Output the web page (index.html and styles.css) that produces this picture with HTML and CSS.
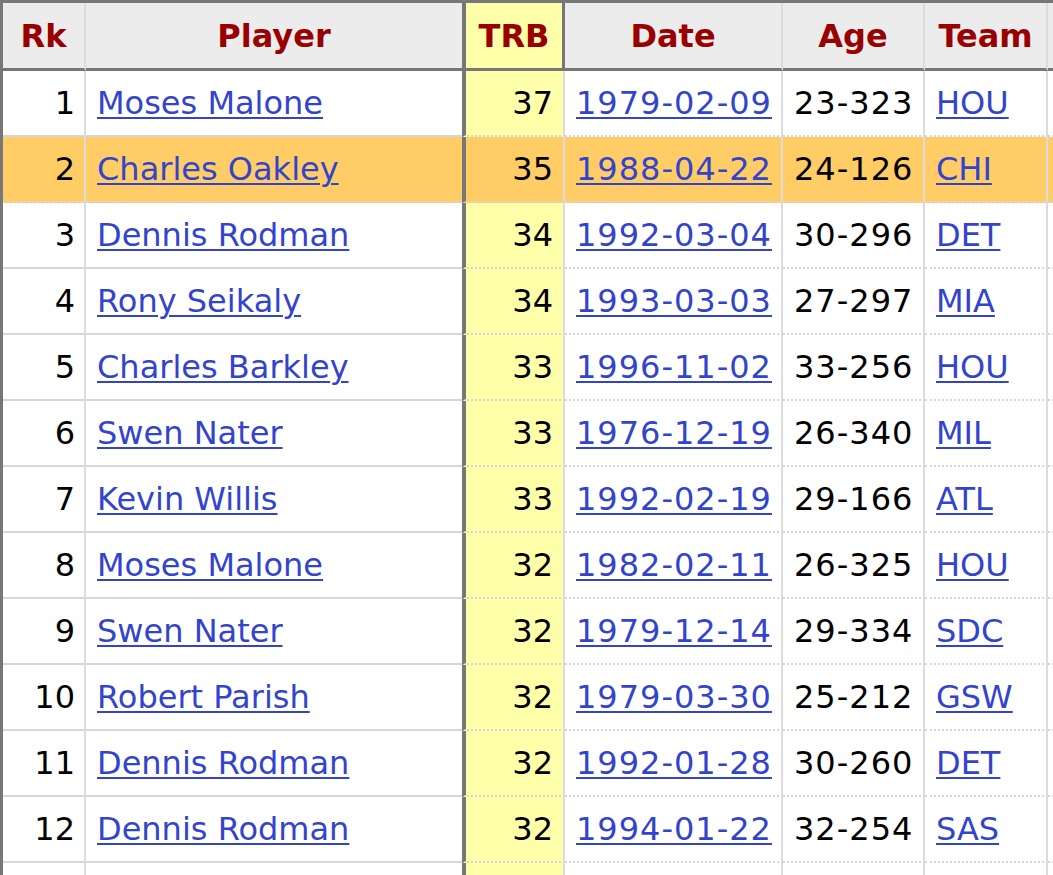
FILE: index.html
```html
<!DOCTYPE html>
<html>
<head>
<meta charset="utf-8">
<link rel="stylesheet" href="styles.css">
</head>
<body>
<table class="stats">
  <thead>
    <tr>
      <th class="c-rk">Rk</th>
      <th class="c-player">Player</th>
      <th class="c-trb">TRB</th>
      <th class="c-date">Date</th>
      <th class="c-age">Age</th>
      <th class="c-team">Team</th>
      <th class="c-more"></th>
    </tr>
  </thead>
  <tbody>
    <tr><td class="c-rk">1</td><td class="c-player"><a href="#">Moses Malone</a></td><td class="c-trb">37</td><td class="c-date"><a href="#">1979-02-09</a></td><td class="c-age">23-323</td><td class="c-team"><a href="#">HOU</a></td><td class="c-more"></td></tr>
    <tr class="hl"><td class="c-rk">2</td><td class="c-player"><a href="#">Charles Oakley</a></td><td class="c-trb">35</td><td class="c-date"><a href="#">1988-04-22</a></td><td class="c-age">24-126</td><td class="c-team"><a href="#">CHI</a></td><td class="c-more"></td></tr>
    <tr><td class="c-rk">3</td><td class="c-player"><a href="#">Dennis Rodman</a></td><td class="c-trb">34</td><td class="c-date"><a href="#">1992-03-04</a></td><td class="c-age">30-296</td><td class="c-team"><a href="#">DET</a></td><td class="c-more"></td></tr>
    <tr><td class="c-rk">4</td><td class="c-player"><a href="#">Rony Seikaly</a></td><td class="c-trb">34</td><td class="c-date"><a href="#">1993-03-03</a></td><td class="c-age">27-297</td><td class="c-team"><a href="#">MIA</a></td><td class="c-more"></td></tr>
    <tr><td class="c-rk">5</td><td class="c-player"><a href="#">Charles Barkley</a></td><td class="c-trb">33</td><td class="c-date"><a href="#">1996-11-02</a></td><td class="c-age">33-256</td><td class="c-team"><a href="#">HOU</a></td><td class="c-more"></td></tr>
    <tr><td class="c-rk">6</td><td class="c-player"><a href="#">Swen Nater</a></td><td class="c-trb">33</td><td class="c-date"><a href="#">1976-12-19</a></td><td class="c-age">26-340</td><td class="c-team"><a href="#">MIL</a></td><td class="c-more"></td></tr>
    <tr><td class="c-rk">7</td><td class="c-player"><a href="#">Kevin Willis</a></td><td class="c-trb">33</td><td class="c-date"><a href="#">1992-02-19</a></td><td class="c-age">29-166</td><td class="c-team"><a href="#">ATL</a></td><td class="c-more"></td></tr>
    <tr><td class="c-rk">8</td><td class="c-player"><a href="#">Moses Malone</a></td><td class="c-trb">32</td><td class="c-date"><a href="#">1982-02-11</a></td><td class="c-age">26-325</td><td class="c-team"><a href="#">HOU</a></td><td class="c-more"></td></tr>
    <tr><td class="c-rk">9</td><td class="c-player"><a href="#">Swen Nater</a></td><td class="c-trb">32</td><td class="c-date"><a href="#">1979-12-14</a></td><td class="c-age">29-334</td><td class="c-team"><a href="#">SDC</a></td><td class="c-more"></td></tr>
    <tr><td class="c-rk">10</td><td class="c-player"><a href="#">Robert Parish</a></td><td class="c-trb">32</td><td class="c-date"><a href="#">1979-03-30</a></td><td class="c-age">25-212</td><td class="c-team"><a href="#">GSW</a></td><td class="c-more"></td></tr>
    <tr><td class="c-rk">11</td><td class="c-player"><a href="#">Dennis Rodman</a></td><td class="c-trb">32</td><td class="c-date"><a href="#">1992-01-28</a></td><td class="c-age">30-260</td><td class="c-team"><a href="#">DET</a></td><td class="c-more"></td></tr>
    <tr><td class="c-rk">12</td><td class="c-player"><a href="#">Dennis Rodman</a></td><td class="c-trb">32</td><td class="c-date"><a href="#">1994-01-22</a></td><td class="c-age">32-254</td><td class="c-team"><a href="#">SAS</a></td><td class="c-more"></td></tr>
    <tr><td class="c-rk"></td><td class="c-player"></td><td class="c-trb"></td><td class="c-date"></td><td class="c-age"></td><td class="c-team"></td><td class="c-more"></td></tr>
  </tbody>
</table>
</body>
</html>
```

FILE: styles.css
```css
html, body {
  margin: 0;
  padding: 0;
  background: #fff;
  overflow: hidden;
}

.stats {
  font-family: "DejaVu Sans", Verdana, sans-serif;
  font-size: 32px;
  color: #000;
  border-collapse: separate;
  border-spacing: 0;
  table-layout: fixed;
  width: 1151px;
  border-top: 3px solid #777;
  border-left: 3px solid #777;
}

.stats th,
.stats td {
  box-sizing: border-box;
  padding: 0;
  white-space: nowrap;
  overflow: hidden;
}

.stats th {
  height: 68px;
  background: #ececec;
  color: #990000;
  font-weight: bold;
  text-align: center;
  border-bottom: 3px solid #777;
  border-right: 2px solid #dcdcdc;
}

.stats td {
  height: 66px;
  border-bottom: 2px dotted #d6d6d6;
  border-right: 2px solid #dcdcdc;
}

.stats th.c-rk { width: 83px; }
.stats th.c-player { width: 376px; border-right: none; }
.stats th.c-trb {
  width: 103px;
  background: #ffffaa;
  border-left: 4px solid #777;
  border-right: 3px solid #777;
}
.stats th.c-date { width: 218px; }
.stats th.c-age { width: 142px; }
.stats th.c-team { width: 123px; }
.stats th.c-more { width: 106px; }

.stats td.c-rk {
  text-align: right;
  padding-right: 9px;
  border-bottom-style: solid;
}
.stats td.c-player {
  padding-left: 11px;
  border-right: none;
  border-bottom-style: solid;
}
.stats td.c-trb {
  background: #ffffaa;
  text-align: right;
  padding-right: 10px;
  border-left: 4px solid #777;
}
.stats td.c-date { padding-left: 11px; letter-spacing: 1px; }
.stats td.c-age { padding-left: 11px; letter-spacing: 1px; }
.stats td.c-team { padding-left: 11px; }

.stats tr.hl td {
  background: #ffcc66;
  border-bottom-style: dotted;
}
.stats tr.hl td.c-trb { background: #ffcc66; }

.stats a {
  color: #3344cc;
  text-decoration: underline;
  text-decoration-thickness: 2px;
  text-underline-offset: 3px;
}
```
